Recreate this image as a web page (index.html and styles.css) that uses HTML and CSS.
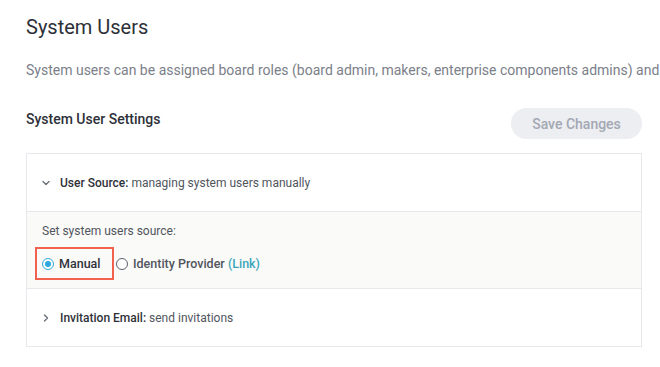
FILE: index.html
```html
<!DOCTYPE html>
<html>
<head>
<meta charset="utf-8">
<link rel="stylesheet" href="styles.css">
</head>
<body>
<div class="page">
  <h1 class="title">System Users</h1>
  <p class="subtitle">System users can be assigned board roles (board admin, makers, enterprise components admins) and</p>
  <div class="settings-head">
    <h2 class="settings-title">System User Settings</h2>
    <button class="save-btn">Save Changes</button>
  </div>
  <div class="panel">
    <div class="row row-open">
      <svg class="chev" width="8" height="8" viewBox="0 0 8 8"><path d="M1 2.5 L4 5.5 L7 2.5" fill="none" stroke="#6b6f78" stroke-width="1.4" stroke-linecap="round" stroke-linejoin="round"/></svg>
      <span class="label">User Source:</span>&nbsp;<span class="value">managing system users manually</span>
    </div>
    <div class="body">
      <div class="body-label">Set system users source:</div>
      <div class="radios">
        <div class="radio-item highlight">
          <span class="radio checked"></span>
          <span class="radio-text">Manual</span>
        </div>
        <div class="radio-item plain">
          <span class="radio"></span>
          <span class="radio-text muted">Identity Provider <span class="link">(Link)</span></span>
        </div>
      </div>
    </div>
    <div class="row">
      <svg class="chev" width="8" height="8" viewBox="0 0 8 8"><path d="M2.5 1 L5.5 4 L2.5 7" fill="none" stroke="#6b6f78" stroke-width="1.4" stroke-linecap="round" stroke-linejoin="round"/></svg>
      <span class="label">Invitation Email:</span>&nbsp;<span class="value">send invitations</span>
    </div>
  </div>
</div>
</body>
</html>
```
FILE: styles.css
```css
* { box-sizing: border-box; }
html, body { margin: 0; padding: 0; background: #fff; }
body { font-family: Roboto, "Noto Sans", sans-serif; color: #2f3239; }
.page { padding: 13px 0 0 26px; width: 660px; overflow: hidden; }
.title { margin: 0; font-size: 20px; font-weight: 400; line-height: 28px; color: #2d3038; }
.subtitle { margin: 20px 0 0; font-size: 14px; line-height: 18px; color: #7b8089; white-space: nowrap; }
.settings-head { display: flex; justify-content: space-between; align-items: center; margin-top: 29px; width: 616px; }
.settings-title { margin: 0; font-size: 14px; font-weight: 500; color: #2d3038; line-height: 18px; position: relative; top: -5px; }
.save-btn { border: none; background: #eceef2; color: #a3a8b3; font-family: Roboto, sans-serif; font-weight: 500; font-size: 14px; height: 31px; width: 131px; border-radius: 16px; padding: 0; }
.panel { margin-top: 14px; width: 616px; border: 1px solid #e7e7ec; }
.row { height: 57px; display: flex; align-items: center; padding-left: 15px; font-size: 12px; }
.row-open { height: 58px; border-bottom: 1px solid #e7e7ec; }
.chev { margin-right: 10px; }
.label { font-weight: 500; color: #2f3239; }
.value { color: #51555d; }
.body { background: #fafaf9; border-bottom: 1px solid #e7e7ec; height: 77px; padding: 11px 0 0 15px; }
.body-label { font-size: 12px; color: #51555d; line-height: 16px; }
.radios { display: flex; align-items: center; margin-top: 8px; margin-left: -7px; }
.radio-item { display: flex; align-items: center; height: 33px; }
.radio-item.highlight { border: 2px solid #f2604e; width: 79px; padding-left: 5px; }
.radio-item.plain { padding-left: 2px; }
.radio { width: 12px; height: 12px; border-radius: 50%; border: 1px solid #5c6069; display: inline-block; margin-right: 5px; position: relative; background: #fff; flex: none; }
.radio.checked { border-color: #2ea7e0; }
.radio.checked::after { content: ""; position: absolute; left: 2px; top: 2px; width: 6px; height: 6px; border-radius: 50%; background: #2ea7e0; }
.radio-text { font-size: 12.5px; font-weight: 500; color: #2f3239; }
.radio-text.muted { color: #51555d; }
.link { color: #3aa5ba; }
```
